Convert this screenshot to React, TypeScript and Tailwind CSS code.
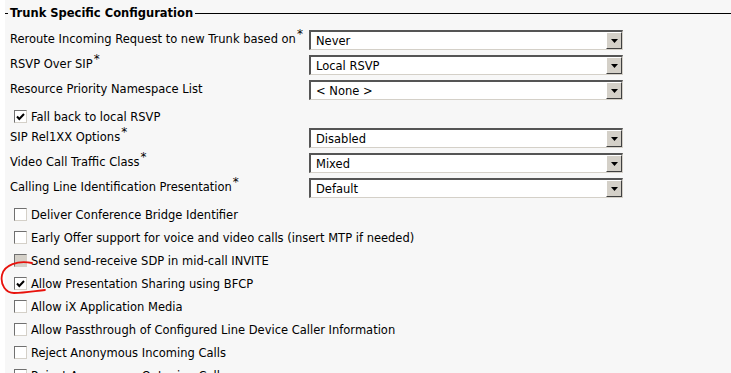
import React from "react";

const font = { fontFamily: '"DejaVu Sans", Verdana, sans-serif' };

function Select({ value }: { value: string }) {
  return (
    <div className="w-[314px] h-[20px] flex border-t-2 border-l-2 border-t-[#555] border-l-[#555] border-b border-r border-b-[#d4d0c8] border-r-[#d4d0c8] bg-white">
      <div className="flex-1 pl-[5px] text-[11.5px] leading-[18px] text-black">{value}</div>
      <div className="w-[16px] h-full bg-[#d4d0c8] border-t border-l border-t-white border-l-white border-b border-r border-b-[#404040] border-r-[#404040] flex items-center justify-center">
        <svg width="7" height="4" viewBox="0 0 7 4">
          <polygon points="0,0 7,0 3.5,4" fill="#000" />
        </svg>
      </div>
    </div>
  );
}

function SelectRow({ label, req, value }: { label: string; req?: boolean; value: string }) {
  return (
    <div className="h-[25px] flex items-start">
      <div className="w-[304px] pl-[5px] pt-[2px] text-[11.5px] leading-[14px] text-black whitespace-nowrap">
        {label}
        {req && <span className="relative top-[-5px] ml-[1px] text-[12px]">*</span>}
      </div>
      <Select value={value} />
    </div>
  );
}

function Box({ checked, disabled }: { checked?: boolean; disabled?: boolean }) {
  return (
    <div
      className={`w-[13px] h-[13px] border-t border-l border-t-[#707070] border-l-[#707070] border-b border-r border-b-[#d4d0c8] border-r-[#d4d0c8] flex items-center justify-center ${
        disabled ? "bg-[#d4d0c8]" : "bg-white"
      }`}
    >
      {checked && (
        <svg width="9" height="8" viewBox="0 0 9 8">
          <path d="M1 3.5 L3.3 6 L8 1" stroke="#000" strokeWidth="2" fill="none" />
        </svg>
      )}
    </div>
  );
}

function CheckRow({ label, checked, disabled }: { label: string; checked?: boolean; disabled?: boolean }) {
  return (
    <div className="h-[23px] flex items-center pl-[9px]">
      <Box checked={checked} disabled={disabled} />
      <span className="ml-[4px] text-[11.5px] leading-[14px] text-black whitespace-nowrap">{label}</span>
    </div>
  );
}

export default function App() {
  return (
    <div className="w-[731px] h-[373px] overflow-hidden bg-white pl-[5px]" style={font}>
      <div className="relative h-full bg-[#f7f7f7]">
        <div className="h-[26px] flex items-center">
          <div className="w-[3px] h-px bg-black" />
          <span className="px-[2px] text-[11.5px] font-bold text-black leading-[14px]">Trunk Specific Configuration</span>
          <div className="flex-1 h-px bg-black" />
        </div>
        <div className="mt-[4px]">
          <SelectRow label="Reroute Incoming Request to new Trunk based on" req value="Never" />
          <SelectRow label="RSVP Over SIP" req value="Local RSVP" />
          <SelectRow label="Resource Priority Namespace List" value="< None >" />
          <div className="h-[23px] flex items-center pl-[9px]">
            <Box checked />
            <span className="ml-[4px] text-[11.5px] leading-[14px] text-black">Fall back to local RSVP</span>
          </div>
          <SelectRow label="SIP Rel1XX Options" req value="Disabled" />
          <SelectRow label="Video Call Traffic Class" req value="Mixed" />
          <SelectRow label="Calling Line Identification Presentation" req value="Default" />
          <CheckRow label="Deliver Conference Bridge Identifier" />
          <CheckRow label="Early Offer support for voice and video calls (insert MTP if needed)" />
          <CheckRow label="Send send-receive SDP in mid-call INVITE" disabled />
          <CheckRow label="Allow Presentation Sharing using BFCP" checked />
          <CheckRow label="Allow iX Application Media" />
          <CheckRow label="Allow Passthrough of Configured Line Device Caller Information" />
          <CheckRow label="Reject Anonymous Incoming Calls" />
          <CheckRow label="Reject Anonymous Outgoing Calls" />
        </div>
        <svg className="absolute left-[-5px] top-[255px]" width="60" height="45" viewBox="0 0 60 45">
          <path
            d="M32 8 C 18 5, 4 10, 2 20 C 0 30, 6 38, 14 38 C 25 38, 35 36, 45 35"
            stroke="#e8120c"
            strokeWidth="1.8"
            fill="none"
            strokeLinecap="round"
          />
        </svg>
      </div>
    </div>
  );
}
